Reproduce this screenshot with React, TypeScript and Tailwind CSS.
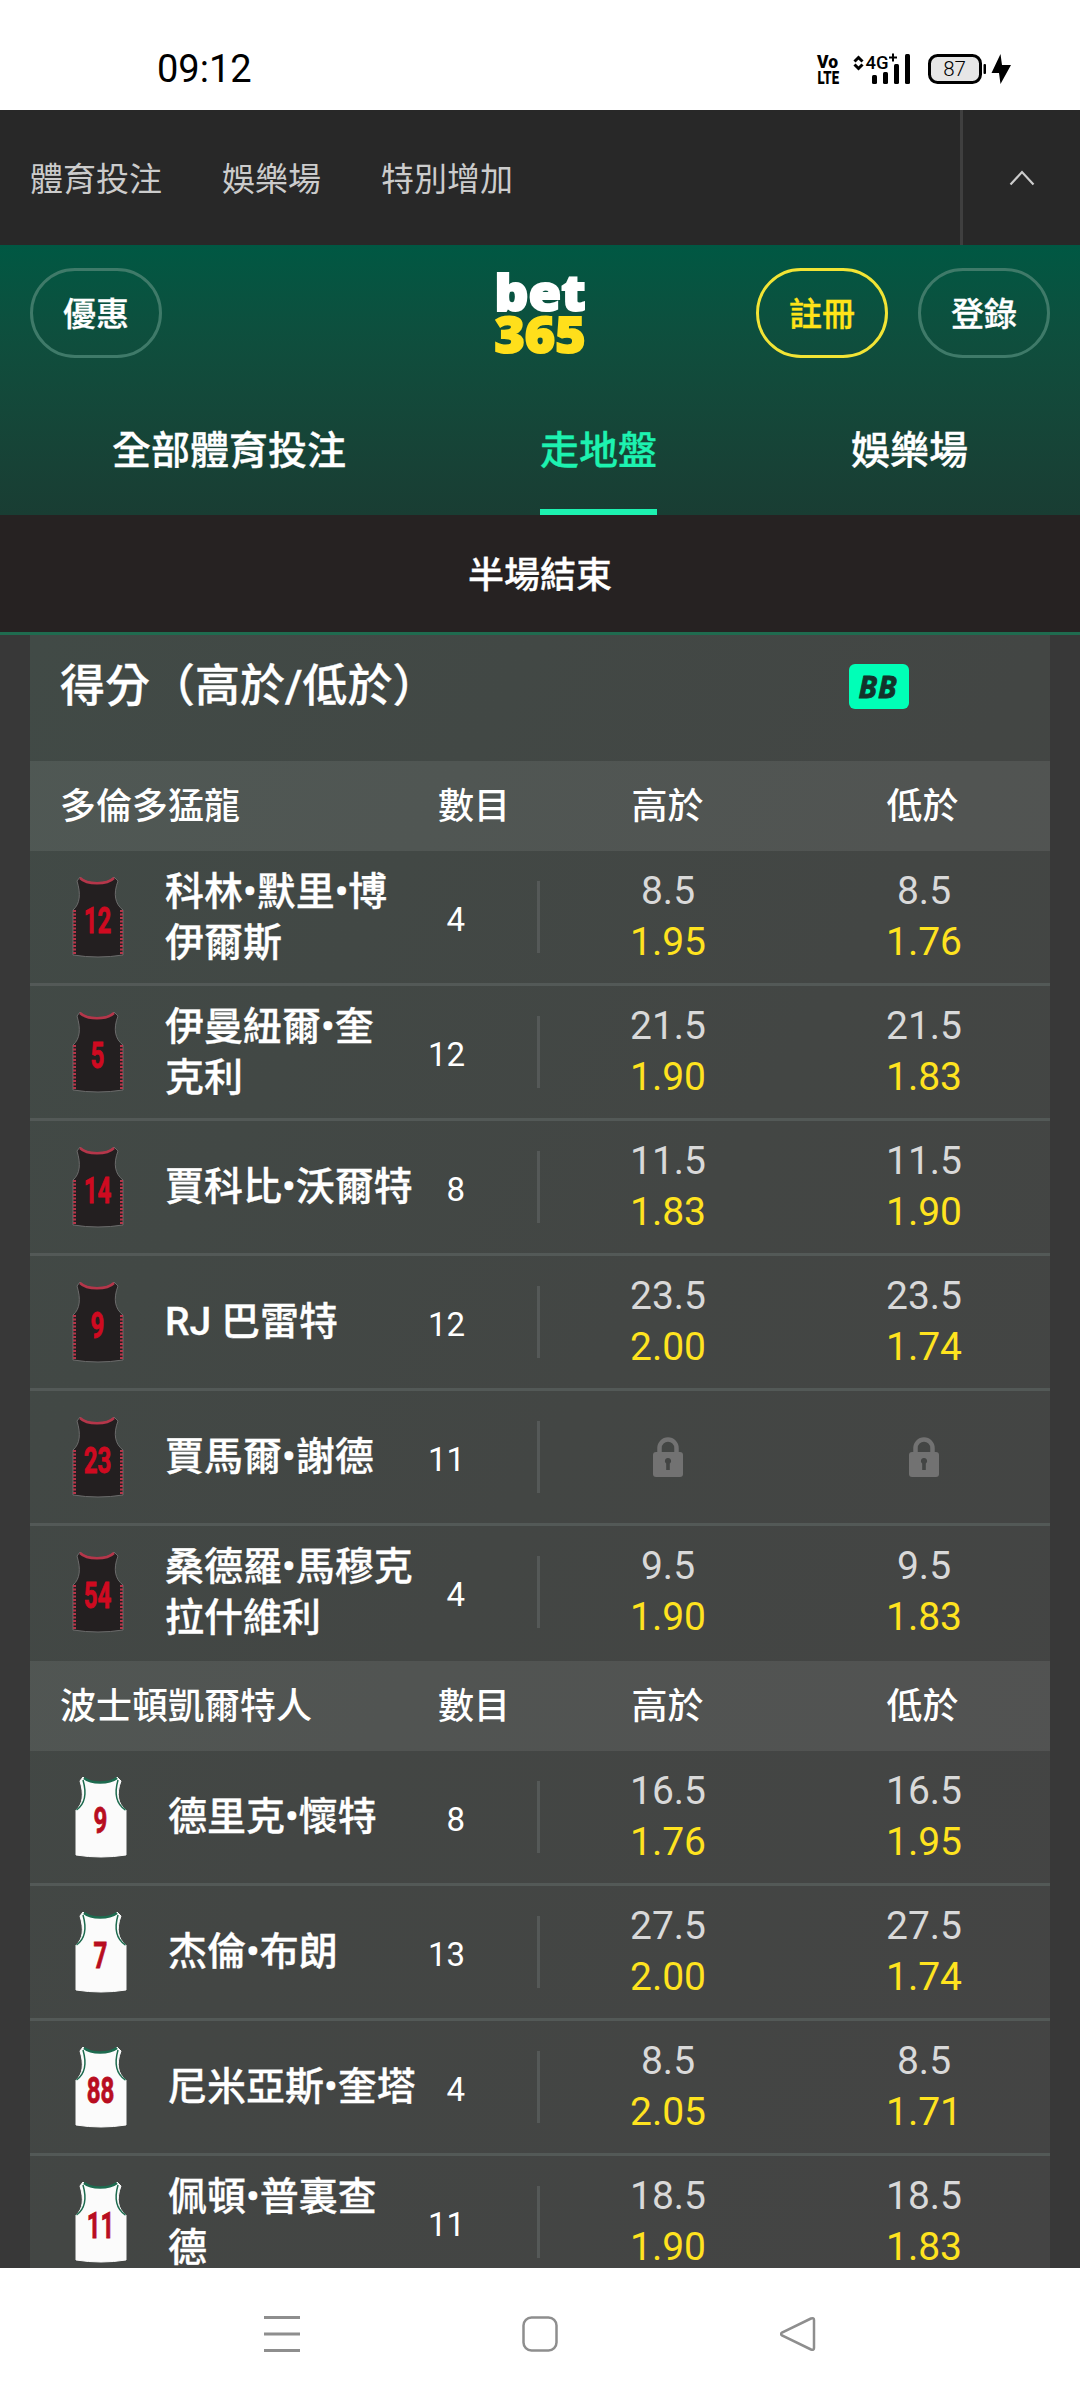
import * as React from 'react';
import { clsx } from 'clsx';

type Kit = 'dark' | 'white';

interface Price {
  line: string;
  odds: string;
}

interface Player {
  number: string;
  name: string[];
  count: number;
  over?: Price;
  under?: Price;
}

interface Team {
  name: string;
  kit: Kit;
  players: Player[];
}

const teams: Team[] = [
  {
    name: '多倫多猛龍',
    kit: 'dark',
    players: [
      { number: '12', name: ['科林•默里•博', '伊爾斯'], count: 4, over: { line: '8.5', odds: '1.95' }, under: { line: '8.5', odds: '1.76' } },
      { number: '5', name: ['伊曼紐爾•奎', '克利'], count: 12, over: { line: '21.5', odds: '1.90' }, under: { line: '21.5', odds: '1.83' } },
      { number: '14', name: ['賈科比•沃爾特'], count: 8, over: { line: '11.5', odds: '1.83' }, under: { line: '11.5', odds: '1.90' } },
      { number: '9', name: ['RJ 巴雷特'], count: 12, over: { line: '23.5', odds: '2.00' }, under: { line: '23.5', odds: '1.74' } },
      { number: '23', name: ['賈馬爾•謝德'], count: 11 },
      { number: '54', name: ['桑德羅•馬穆克', '拉什維利'], count: 4, over: { line: '9.5', odds: '1.90' }, under: { line: '9.5', odds: '1.83' } },
    ],
  },
  {
    name: '波士頓凱爾特人',
    kit: 'white',
    players: [
      { number: '9', name: ['德里克•懷特'], count: 8, over: { line: '16.5', odds: '1.76' }, under: { line: '16.5', odds: '1.95' } },
      { number: '7', name: ['杰倫•布朗'], count: 13, over: { line: '27.5', odds: '2.00' }, under: { line: '27.5', odds: '1.74' } },
      { number: '88', name: ['尼米亞斯•奎塔'], count: 4, over: { line: '8.5', odds: '2.05' }, under: { line: '8.5', odds: '1.71' } },
      { number: '11', name: ['佩頓•普裏查', '德'], count: 11, over: { line: '18.5', odds: '1.90' }, under: { line: '18.5', odds: '1.83' } },
    ],
  },
];

function StatusBar() {
  return (
    <div className="flex h-[110px] shrink-0 items-start justify-between bg-white pt-[47px] pr-[68px] pl-[157px] text-black">
      <span className="text-[38px] leading-[44px]">09:12</span>
      <svg width="198" height="44" viewBox="814 47 198 44" aria-hidden="true">
        <g fontWeight="900" fontSize="18.500">
          <text x="817" y="68" textLength="21" lengthAdjust="spacingAndGlyphs">Vo</text>
          <text x="817.500" y="84" textLength="21.500" lengthAdjust="spacingAndGlyphs">LTE</text>
        </g>
        <path d="M854.500 61.500l4-4 4 4M854.500 64.500l4 4 4-4" fill="none" stroke="black" strokeWidth="3" />
        <text x="865.500" y="68.500" fontSize="19" fontWeight="500" textLength="23" lengthAdjust="spacingAndGlyphs">4G</text>
        <path d="M893 53.500v8M889 57.500h8" stroke="black" strokeWidth="2" />
        <g>
          <rect x="872" y="75" width="5" height="9" rx="1.500" />
          <rect x="883" y="72" width="5" height="12" rx="1.500" />
          <rect x="894" y="64" width="5" height="20" rx="1.500" />
          <rect x="905" y="54" width="5" height="30" rx="1.500" />
        </g>
        <rect x="929.500" y="55.500" width="51" height="27" rx="8" fill="#e6e6e6" stroke="black" strokeWidth="3" />
        <rect x="983.500" y="64" width="2.500" height="10" rx="1" />
        <text x="954.500" y="76" textAnchor="middle" fontSize="20.500" fontWeight="300">87</text>
        <path d="M1000.500 54L991.500 73h7.500l1.500 11 10.500-19h-9z" />
      </svg>
    </div>
  );
}

function TopNav() {
  return (
    <nav className="flex h-[135px] shrink-0 items-center bg-[#282828] pl-[30px] text-[33px] text-[#ccc]">
      <div className="flex flex-1 gap-[60px] pt-1">
        <span>體育投注</span>
        <span>娛樂場</span>
        <span>特別增加</span>
      </div>
      <button className="flex h-full w-[120px] items-center justify-center border-l-[3px] border-[#3f3f3f]">
        <svg width="26" height="16" viewBox="0 0 26 16" aria-label="收起">
          <path d="M1.500 14.500L13 2l11.500 12.500" fill="none" stroke="#ccc" strokeWidth="2.200" />
        </svg>
      </button>
    </nav>
  );
}

function PillButton({ label, highlight }: { label: string; highlight?: boolean }) {
  return (
    <button
      className={clsx(
        'h-[90px] w-[132px] rounded-full border-[3px] pt-1 text-[33px] font-medium [-webkit-text-stroke:0.3px]',
        highlight ? 'border-[#f2e435] text-[#ffe418]' : 'border-[#3f7a69] text-white'
      )}
    >
      {label}
    </button>
  );
}

function Logo() {
  return (
    <svg className="overflow-visible" width="94" height="90" viewBox="0 0 94 90" aria-label="bet365">
      <g fontFamily="'Open Sans'" fontWeight="800" strokeWidth="2">
        <text x="1.500" y="42.500" fontSize="50" fill="white" stroke="white" textLength="91" lengthAdjust="spacingAndGlyphs">bet</text>
        <text x="1.500" y="85" fontSize="49.500" fill="#ffdf1b" stroke="#ffdf1b" textLength="91" lengthAdjust="spacingAndGlyphs">365</text>
      </g>
    </svg>
  );
}

function Header() {
  return (
    <header className="flex h-[270px] shrink-0 flex-col bg-linear-to-b from-[#005843] to-[#193d33]">
      <div className="grid grid-cols-3 items-center px-[30px] pt-[23px]">
        <PillButton label="優惠" />
        <div className="justify-self-center">
          <Logo />
        </div>
        <div className="flex gap-[30px] justify-self-end">
          <PillButton label="註冊" highlight />
          <PillButton label="登錄" />
        </div>
      </div>
      <div className="flex flex-1 justify-around px-[15px] text-[39px] font-medium text-white [-webkit-text-stroke:0.3px]">
        <span className="pt-16">全部體育投注</span>
        <span className="border-b-[6px] border-[#1df2b0] pt-16 text-[#1df2b0]">走地盤</span>
        <span className="pt-16">娛樂場</span>
      </div>
    </header>
  );
}

const jerseyShape = 'M8 1C14 9 36 9 42 1L46 5C41 18 43 28 51 34V79Q26 83 1 79V34C8 28 9 18 5 5Z';

function Jersey({ number, kit }: { number: string; kit: Kit }) {
  const dark = kit === 'dark';
  const numberColor = dark ? '#cf0a20' : '#b80d20';
  return (
    <svg className="shrink-0" width="52" height="82" viewBox="0 0 52 82" aria-hidden="true">
      <path d={jerseyShape} fill={dark ? '#231f20' : '#fbfbfb'} stroke={dark ? '#6b6b6b' : '#fbfbfb'} strokeWidth="1" />
      {dark ? (
        <>
          <path d="M8 2C15 9 35 9 42 2" fill="none" stroke="#b5364a" strokeWidth="2.500" />
          <path d="M2.500 34V79M49.500 34V79" stroke="#b5364a" strokeWidth="3" strokeDasharray="2 1.500" />
        </>
      ) : (
        <>
          <path d="M9 2C16 8 34 8 42 2" fill="none" stroke="#1d6b4f" strokeWidth="2.500" />
          <path d="M8 4C12 18 10 28 1.500 34M43 4C39 18 41 28 50.500 34" fill="none" stroke="#1d6b4f" strokeWidth="1.500" />
        </>
      )}
      <text
        transform="translate(25.500 56.500) scale(0.66 1)"
        textAnchor="middle"
        fontSize="36.500"
        fontWeight="700"
        fill={numberColor}
        stroke={numberColor}
        strokeWidth="0.800"
      >
        {number}
      </text>
    </svg>
  );
}

function LockIcon() {
  return (
    <svg width="32" height="40" viewBox="0 0 32 40" aria-hidden="true">
      <path d="M7.500 16V11a8.500 8.500 0 0 1 17 0V16" fill="none" stroke="#727272" strokeWidth="4.500" />
      <rect x="1" y="15" width="30" height="25" rx="3" fill="#727272" />
      <path d="M16 21a3 3 0 0 1 1.800 5.500V33h-3.600V26.500A3 3 0 0 1 16 21z" fill="#434544" />
    </svg>
  );
}

function PriceCell({ price }: { price?: Price }) {
  return (
    <div className="flex w-64 shrink-0 flex-col items-center justify-center text-[39px] leading-[51px]">
      {price ? (
        <>
          <span className="text-[#d9d9d9]">{price.line}</span>
          <span className="text-[#ffe31f]">{price.odds}</span>
        </>
      ) : (
        <LockIcon />
      )}
    </div>
  );
}

function PlayerRow({ player, kit }: { player: Player; kit: Kit }) {
  return (
    <div className="flex h-[135px] border-b-[3px] border-[#535957] last:border-transparent">
      <div
        className={clsx(
          'flex w-[435px] shrink-0 items-center gap-[41px]',
          kit === 'dark' ? 'pl-[42px]' : 'pl-[45px]'
        )}
      >
        <Jersey number={player.number} kit={kit} />
        <div className="w-0 flex-1 pt-px text-[39px] leading-[51px] font-medium whitespace-nowrap text-white [-webkit-text-stroke:0.3px]">
          {player.name.map((part) => (
            <div key={part}>{part}</div>
          ))}
        </div>
        <span className="-ml-[41px] pt-1.5 text-[33px] text-white">{player.count}</span>
      </div>
      <div className="flex w-[75px] shrink-0 items-center justify-end">
        <div className="h-[72px] w-[3px] bg-[#555958]" />
      </div>
      <PriceCell price={player.over} />
      <PriceCell price={player.under} />
    </div>
  );
}

function TeamTable({ team }: { team: Team }) {
  return (
    <section>
      <div className="flex h-[90px] items-center bg-white/8 pt-0.5 text-[36px] font-medium text-white">
        <span className="w-[408px] pl-[30px]">{team.name}</span>
        <span className="w-[102px]">數目</span>
        <span className="w-[255px] text-center">高於</span>
        <span className="w-[255px] text-center">低於</span>
      </div>
      <div>
        {team.players.map((player) => (
          <PlayerRow key={player.number} player={player} kit={team.kit} />
        ))}
      </div>
    </section>
  );
}

function SystemNav() {
  return (
    <div className="flex h-[132px] shrink-0 items-start justify-between bg-white px-[264px] pt-12 text-[#8e8e8e]">
      <svg width="36" height="36" viewBox="0 0 36 36" fill="none" stroke="currentColor" strokeWidth="3" aria-hidden="true">
        <path d="M0 1.500h36M0 18h36M0 34.500h36" />
      </svg>
      <svg width="36" height="36" viewBox="0 0 36 36" fill="none" stroke="currentColor" strokeWidth="2.500" aria-hidden="true">
        <rect x="1.500" y="1.500" width="33" height="33" rx="8" />
      </svg>
      <svg width="36" height="36" viewBox="0 0 36 36" fill="none" stroke="currentColor" strokeWidth="2.500" aria-hidden="true">
        <path d="M31 2.500L2 16.500Q0 18 2 19.500L31 33.500Q34 34.500 34 32V4Q34 1.500 31 2.500z" />
      </svg>
    </div>
  );
}

export default function App() {
  return (
    <div className="flex h-[2400px] w-[1080px] flex-col overflow-hidden bg-[#383838] font-['Roboto','Noto_Sans_CJK_TC',sans-serif]">
      <StatusBar />
      <TopNav />
      <Header />
      <div className="flex h-[120px] shrink-0 items-center justify-center border-b-[3px] border-[#1f6b4f] bg-[#262222] pt-1 text-[36px] font-medium text-white [-webkit-text-stroke:0.3px]">
        半場結束
      </div>
      <main className="min-h-0 flex-1 overflow-hidden px-[30px]">
        <div className="bg-linear-to-br from-[#414a46] via-[#434644] to-[#444444]">
          <div className="flex h-[126px] items-start justify-between pt-[25px] pr-[141px] pl-[30px] text-white">
            <h2 className="text-[45px] leading-[54px] font-medium [-webkit-text-stroke:0.3px]">得分（高於/低於）</h2>
            <span className="mt-1 flex h-[45px] w-[60px] items-center justify-center rounded-[6px] bg-[#00ffb7]">
              <span className="pr-0.5 font-['Open_Sans',sans-serif] text-[30px] leading-[43px] font-bold tracking-[1px] text-[#12332b] italic [-webkit-text-stroke:0.8px]">
                BB
              </span>
            </span>
          </div>
          {teams.map((team) => (
            <TeamTable key={team.name} team={team} />
          ))}
        </div>
      </main>
      <SystemNav />
    </div>
  );
}
